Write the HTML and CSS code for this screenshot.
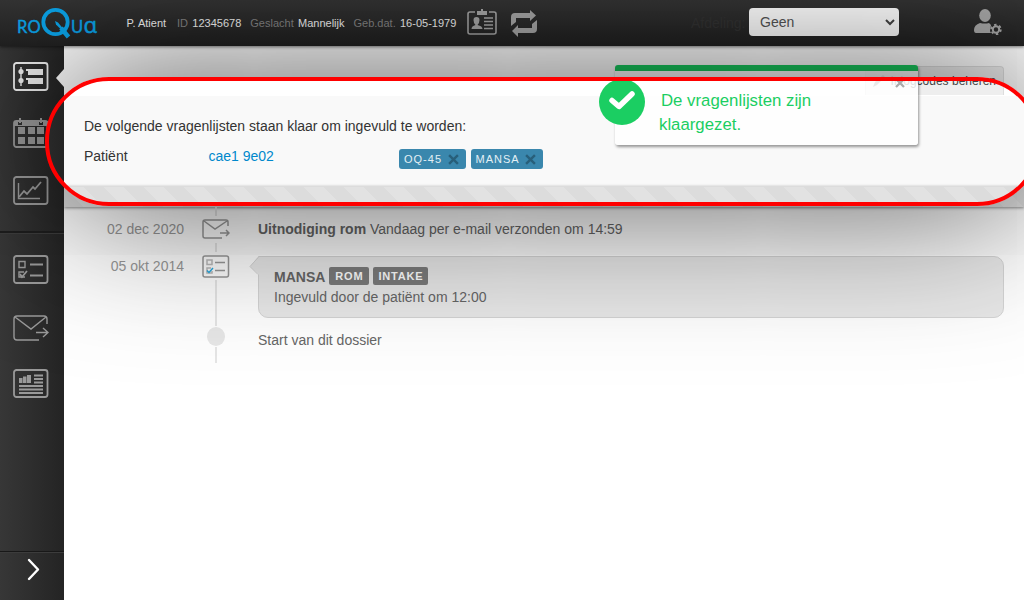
FILE: index.html
```html
<!DOCTYPE html>
<html lang="nl">
<head>
<meta charset="utf-8">
<title>RoQua</title>
<link rel="stylesheet" href="styles.css">
</head>
<body>
<header class="topbar">
  <svg class="logo" width="84" height="36" viewBox="0 0 84 36">
    <g class="logo-text"><text x="1" y="29" textLength="9">R</text><text x="11.500" y="29" textLength="13">O</text><text x="55" y="29" textLength="12">U</text><text class="wide" x="67.500" y="29" textLength="14">ɑ</text></g>
    <circle cx="39.500" cy="18" r="12.200"/>
    <path class="tail" d="M45 24l7.500 9"/><path class="nib" d="M39 17l3 1.500 5 6-2 1-5-5z"/>
  </svg>
  <div class="patient"><b>P. Atient</b><span>ID</span><b>12345678</b><span>Geslacht</span><b>Mannelijk</b><span>Geb.dat.</span><b>16-05-1979</b></div>
  <svg class="card-icon" width="30" height="27" viewBox="0 0 30 27">
    <path class="line" d="M8 3H3Q1 3 1 5v18q0 2 2 2h24q2 0 2-2V5q0-2-2-2h-5"/>
    <path class="fill" d="M10 2h4V0h2v2h4v4H10zM4.500 20q0-3 4-4-2-2-2-5 0-3 3-3t3 3q0 3-2 5 5 1 5 4z"/>
    <path class="line thin" d="M17 9h9M17 12.500h9M17 16h9M17 19.500h9"/>
  </svg>
  <svg class="loop-icon" width="27" height="27" viewBox="0 0 27 27">
    <path class="fill" d="M0 16V7q0-4 4-4h15V0l6 5.500-6 5.500V8H5v4zM26 10v9q0 4-4 4H7v4l-6-6 6-6v3h14v-4z"/>
  </svg>
  <label class="dept">Afdeling:</label>
  <div class="select">Geen<svg width="10" height="7" viewBox="0 0 10 7"><path d="M1 1l4 4 4-4"/></svg></div>
  <svg class="user-icon" width="28" height="26" viewBox="0 0 28 26">
    <ellipse class="fill" cx="11" cy="6.500" rx="5.800" ry="6.500"/>
    <path class="fill" d="M0 21q0-5 6-7 5 1 9 0l2 2-1 6 1 2H2q-2 0-2-3z"/>
    <circle class="gear" cx="22" cy="20.500" r="3.200"/><circle class="teeth" cx="22" cy="20.500" r="4.700"/>
  </svg>
</header>
<div class="body">
  <nav class="side">
    <svg class="i1" width="36" height="30" viewBox="0 0 36 30"><rect class="line" x="1" y="1" width="33.500" height="27" rx="2.500"/><path class="line thin" d="M8 5v19"/><circle class="fill" cx="8" cy="9.500" r="2.600"/><circle class="fill" cx="8" cy="18.500" r="2.600"/><path class="fill" d="M13 7h17v6H15v-4h-2zM13 16h17v6H15v-4h-2z"/></svg>
    <svg class="i2" width="36" height="31" viewBox="0 0 36 31"><rect class="line" x="1" y="3" width="33.500" height="26" rx="2.500"/><path class="fill" d="M1 3h4v4h4V3h17v4h4V3h4.500v5H1zM6 0h2v5H6zM27 0h2v5h-2zM5 9h7v7H5zM15 9h7v7h-7zM24 9h7v7h-7zM5 19h7v7H5zM15 19h7v7h-7zM24 19h7v7h-7z"/></svg>
    <svg class="i3" width="36" height="30" viewBox="0 0 36 30"><rect class="line" x="1" y="1" width="33.500" height="27" rx="2.500"/><path class="line thin" d="M5.500 7v15.500h21.500"/><path class="line" d="M6 21l5-6 3 3 6-7 2 2 6-7"/></svg>
    <svg class="i4" width="36" height="30" viewBox="0 0 36 30"><rect class="line" x="1" y="1" width="33.500" height="27" rx="2.500"/><path class="line thin" d="M6 6.500h6v6H6zM12 22H6v-5h5"/><path class="line" d="M17 9.500h13M17 20.500h13M7 19l2 3 5-6"/></svg>
    <svg class="i5" width="36" height="28" viewBox="0 0 36 28"><path class="line thin" d="M26 25H4q-3 0-3-3V4q0-3 3-3h27q3 0 3 3v5M2 2l16 12L33 2M23 17.500h11M30 13l5 4.500-5 4.500"/></svg>
    <svg class="i6" width="36" height="30" viewBox="0 0 36 30"><rect class="line" x="1" y="1" width="33.500" height="27" rx="2.500"/><path class="fill" d="M6 9h3.500v5H6zM10 7.500h3.500V14H10zM14 6h4v8h-4z"/><path class="line" d="M21 6.500h9M21 10h9M21 13.500h9M6 17h24M6 20.500h24M6 24h24"/></svg>
    <div class="more"><svg width="14" height="24" viewBox="0 0 14 24"><path d="M2 2l9 9.500L2 21"/></svg></div>
    <i class="notch"></i>
  </nav>
  <main>
    <div class="tabs"><div class="tab"><svg width="12" height="12" viewBox="0 0 12 12"><path d="M0 12l2-5 8-7 2 2-8 8z"/></svg>Inlogcodes beheren</div></div>
    <section class="ready">
      <p>De volgende vragenlijsten staan klaar om ingevuld te worden:</p>
      <div class="ready-row"><span class="who">Patiënt</span><a>cae1 9e02</a><span class="chips"><span>OQ-45<svg width="11" height="11" viewBox="0 0 10 10"><path d="M1 1l8 8M9 1L1 9"/></svg></span><span>MANSA<svg width="11" height="11" viewBox="0 0 10 10"><path d="M1 1l8 8M9 1L1 9"/></svg></span></span></div>
    </section>
    <div class="stripes"></div>
    <section class="timeline">
      <div class="dates"><div>02 dec 2020</div><div>05 okt 2014</div></div>
      <div class="rail">
        <i class="seg s1"></i>
        <svg class="r1" width="28" height="20" viewBox="0 0 28 20"><path d="M20 19H3q-2 0-2-2V3q0-2 2-2h21q2 0 2 2v4M2 2l11 8L25 2M18 14h9M24 11l3 3-3 3"/></svg>
        <i class="seg s1"></i>
        <svg class="r2" width="28" height="23" viewBox="0 0 28 23"><rect x="1" y="1" width="25.500" height="21" rx="2"/><path d="M13 7.500h10M13 15.500h10"/><path class="faint" d="M5 5h5v4.500H5zM9 13H5v5h5v-2"/><path class="blue" d="M5 15.500l2 2 4-4.500"/></svg>
        <i class="seg s2"></i><i class="dot"></i><i class="seg s3"></i>
      </div>
      <div class="entries">
        <div class="entry"><b>Uitnodiging rom</b> Vandaag per e-mail verzonden om 14:59</div>
        <div class="bubble"><svg class="beak" width="10" height="20" viewBox="0 0 10 20"><path class="beak-fill" d="M10 0L1 10.500 10 19z"/><path class="beak-line" d="M10 .5L1 10.500 9 18.500"/></svg>
          <div class="title"><b>MANSA</b><span>ROM</span><span>INTAKE</span></div>
          <div>Ingevuld door de patiënt om 12:00</div>
        </div>
        <div class="entry">Start van dit dossier</div>
      </div>
    </section>
  </main>
</div>
<div class="toast">
  <div class="ok"><svg width="26" height="20" viewBox="0 0 26 20"><path d="M3 9.500l7 6L23 3"/></svg></div>
  <div class="msg">De vragenlijsten zijn<br>klaargezet.</div>
  <svg class="close" width="10" height="10" viewBox="0 0 10 10"><path d="M1 1l8 8M9 1L1 9"/></svg>
</div>
<div class="spotlight"></div>
</body>
</html>
```

FILE: styles.css
```css
* { box-sizing: border-box; }
body { margin: 0; width: 1024px; height: 600px; overflow: hidden; position: relative; background: #fff; font: 14px/20px "Liberation Sans", Arial, sans-serif; color: #333; }
svg { display: block; flex: none; fill: none; }
.topbar { height: 46px; display: flex; align-items: flex-start; background: linear-gradient(#343434, #212121); box-shadow: 0 1px 3px rgba(0,0,0,.5); position: relative; z-index: 2; }
.topbar .line { stroke: #a6a6a6; stroke-width: 1.6; }
.topbar .thin { stroke-width: 1.3; }
.topbar .fill { fill: #a6a6a6; }
.logo { margin: 4px 0 0 16px; }
.logo circle { stroke: #0ba3e8; stroke-width: 3.800; }
.logo-text { fill: #0ba3e8; stroke: #0ba3e8; stroke-width: .4; font: 16.500px Lato, sans-serif; }
.logo-text .wide { font: 22px "Noto Sans", sans-serif; }
.tail { stroke: #0ba3e8; stroke-width: 4.500; }
.nib { fill: #0ba3e8; }
.patient { width: 330px; margin: 13px 0 0 26.500px; display: flex; font-size: 11px; white-space: nowrap; color: #858585; }
.patient b { font-weight: normal; color: #f6f6f6; margin-right: 9px; }
.patient b:first-child { margin-right: 11px; }
.patient span { margin-right: 4.300px; }
.card-icon { margin: 9px 0 0 10.500px; }
.loop-icon { margin: 10px 0 0 14px; }
.dept { margin: 13px 0 0 153px; width: 58px; color: #333; }
.select { margin-top: 8px; width: 150px; height: 28px; border-radius: 4px; background: #fff; color: #555; padding: 0 4px 0 11px; display: flex; align-items: center; justify-content: space-between; }
.select path { stroke: #444; stroke-width: 2; }
.user-icon { margin: 9px 0 0 74.500px; }
.gear { stroke: #a6a6a6; stroke-width: 2; }
.teeth { stroke: #a6a6a6; stroke-width: 2; stroke-dasharray: 2.400 2.520; }
.body { display: flex; height: 554px; }
.side { width: 64px; flex: none; position: relative; background: linear-gradient(90deg, #373737, #242424); display: flex; flex-direction: column; padding-left: 13px; }
.side .line { stroke: #999; stroke-width: 1.8; }
.side .thin { stroke-width: 1.400; }
.side .fill { fill: #999; }
.i1 { margin-top: 16px; }
.side .i1 .line { stroke: #eee; }
.side .i1 .fill { fill: #eee; }
.i2 { margin-top: 26px; }
.i3 { margin-top: 27px; }
.i4 { margin-top: 49px; }
.side::before { content: ""; position: absolute; left: 0; top: 185px; width: 64px; height: 2px; background: #1d1d1d; border-bottom: 1px solid #3c3c3c; }
.i5 { margin-top: 30px; }
.i6 { margin-top: 26px; }
.more { margin: auto 0 0 -13px; height: 49px; border-top: 1px solid #181818; box-shadow: inset 0 1px #3c3c3c; padding: 6px 0 0 27px; }
.more path { stroke: #fff; stroke-width: 2.400; stroke-linecap: round; stroke-linejoin: round; }
.notch { position: absolute; right: 0; top: 23px; border: solid transparent; border-width: 9px 8px 9px 0; border-right-color: #fff; }
main { flex: 1; min-width: 0; }
.tabs { height: 50px; padding: 20px 20px 0 0; display: flex; justify-content: flex-end; }
.tab { width: 139px; height: 29px; background: #eee; border: 1px solid #ddd; border-bottom: 0; border-radius: 4px 4px 0 0; font-size: 12px; line-height: 28px; padding: 0 7px; display: flex; align-items: center; justify-content: space-between; white-space: nowrap; color: #444; }
.tab path { fill: #777; }
.ready { height: 90px; background: #f9f9f9; padding: 20px 20px 0; }
.ready p { margin: 0 0 10px; }
.ready-row { display: flex; }
.who { width: 124.500px; }
.ready-row a { width: 190.500px; color: #08c; }
.chips { display: flex; gap: 5px; padding-top: 3px; }
.chips span { height: 20px; border-radius: 3px; background: #3a87ad; color: #e4f0f5; font-size: 11px; letter-spacing: 1px; padding: 0 7px 0 5px; display: flex; align-items: center; gap: 5.500px; }
.chips path { stroke: #285f7a; stroke-width: 2.200; }
.stripes { height: 21px; border-top: 1px solid #dcdcdc; background: repeating-linear-gradient(45deg, #dcdcdc 0 14.140px, #e2e2e2 14.140px 28.280px); box-shadow: 0 1px 3px rgba(0,0,0,.45); }
.timeline { display: flex; }
.dates { width: 120px; padding-top: 12px; text-align: right; color: #999; }
.dates div { height: 37px; }
.rail { width: 64px; display: flex; flex-direction: column; align-items: center; }
.rail svg { stroke: #999; stroke-width: 1.500; }
.seg { width: 2px; background: #e6e6e6; }
.s1 { height: 9px; }
.r1 { margin: 3px 0 4px; }
.r2 { margin: 3px 0 2px; }
.s2 { height: 46px; }
.dot { width: 18px; height: 19px; border-radius: 50%; background: #e7e7e7; margin: 1px 0; }
.s3 { height: 16px; }
.rail .faint { stroke: #bbb; }
.rail .blue { stroke: #29a9df; }
.entries { width: 746px; margin-left: 10px; color: #666; }
.entry { padding-top: 12px; }
.bubble { position: relative; margin-top: 17px; height: 62px; border: 1px solid #d5d5d5; border-radius: 10px; border-top-left-radius: 0; background: #e9e9e9; padding: 10px 15px; }
.beak { position: absolute; left: -10px; top: -1px; }
.beak-fill { fill: #e9e9e9; }
.beak-line { stroke: #d5d5d5; }
.title { display: flex; gap: 4px; }
.title span { height: 18px; border-radius: 2px; background: #7c7c7c; color: #fff; font-size: 11px; font-weight: bold; line-height: 18px; letter-spacing: .8px; padding: 0 5.500px 0 6px; }
.title span:last-child { padding-right: 5px; padding-left: 5.500px; }
.toast { position: absolute; z-index: 3; left: 615px; top: 65px; width: 303px; height: 80px; border-top: 6px solid #18c95e; border-radius: 3px; background: rgba(255,255,255,.84); box-shadow: 1px 2px 3px rgba(0,0,0,.4); }
.ok { position: absolute; left: -16px; top: 8px; width: 46px; height: 46px; border-radius: 50%; background: #1bce62; padding: 12px 0 0 10px; }
.ok path { stroke: #fff; stroke-width: 5.500; stroke-linejoin: round; stroke-linecap: round; }
.msg { padding: 18px 0 0 44px; text-indent: 2px; color: #1bce62; font-size: 16.800px; line-height: 24px; white-space: nowrap; }
.close { position: absolute; left: 280px; top: 7px; }
.close path { stroke: #aaa; stroke-width: 2.300; }
.spotlight { position: absolute; z-index: 4; left: 45px; top: 77px; width: 996px; height: 129px; border: 4px solid red; border-radius: 64px; box-shadow: 0 0 150px rgba(0,0,0,.7); }
```
